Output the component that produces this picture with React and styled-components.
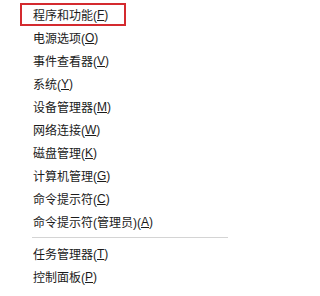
import React from 'react';
import styled, { createGlobalStyle } from 'styled-components';

const GlobalStyle = createGlobalStyle`
	html, body {
		margin: 0;
		padding: 0;
		background: #ffffff;
	}
`;

let Menu = styled.div`
	width: 242px;
	height: 296px;
	box-sizing: border-box;
	padding: 3px 0 0 0;
	background: #ffffff;
	font-family: "Liberation Sans", "Noto Sans CJK SC", sans-serif;
	font-size: 12px;
	color: #1b1b1b;
`;
let Item = styled.div`
	position: relative;
	height: 23px;
	display: flex;
	align-items: center;
	padding-left: 33px;
	white-space: nowrap;
`;
// red marker drawn over the first entry
let Marker = styled.div`
	position: absolute;
	left: 20px;
	top: 0;
	width: 106px;
	height: 23px;
	box-sizing: border-box;
	border: 2px solid #d42a2f;
`;
let Key = styled.span`
	text-decoration: underline;
	text-underline-offset: 1px;
`;
let Separator = styled.div`
	height: 1px;
	margin: 4px 14px 4px 32px;
	background: #d4d4d4;
`;

const groups = [
	[
		{ label: '程序和功能', key: 'F', marked: true },
		{ label: '电源选项', key: 'O' },
		{ label: '事件查看器', key: 'V' },
		{ label: '系统', key: 'Y' },
		{ label: '设备管理器', key: 'M' },
		{ label: '网络连接', key: 'W' },
		{ label: '磁盘管理', key: 'K' },
		{ label: '计算机管理', key: 'G' },
		{ label: '命令提示符', key: 'C' },
		{ label: '命令提示符(管理员)', key: 'A' },
	],
	[
		{ label: '任务管理器', key: 'T' },
		{ label: '控制面板', key: 'P' },
	],
];

export default function App() {
	return (
		<Menu>
			<GlobalStyle />
			{groups.map((group, i) => (
				<React.Fragment key={i}>
					{i > 0 && <Separator />}
					{group.map((item) => (
						<Item key={item.label + item.key}>
							{item.marked && <Marker />}
							{item.label}(<Key>{item.key}</Key>)
						</Item>
					))}
				</React.Fragment>
			))}
		</Menu>
	);
}
